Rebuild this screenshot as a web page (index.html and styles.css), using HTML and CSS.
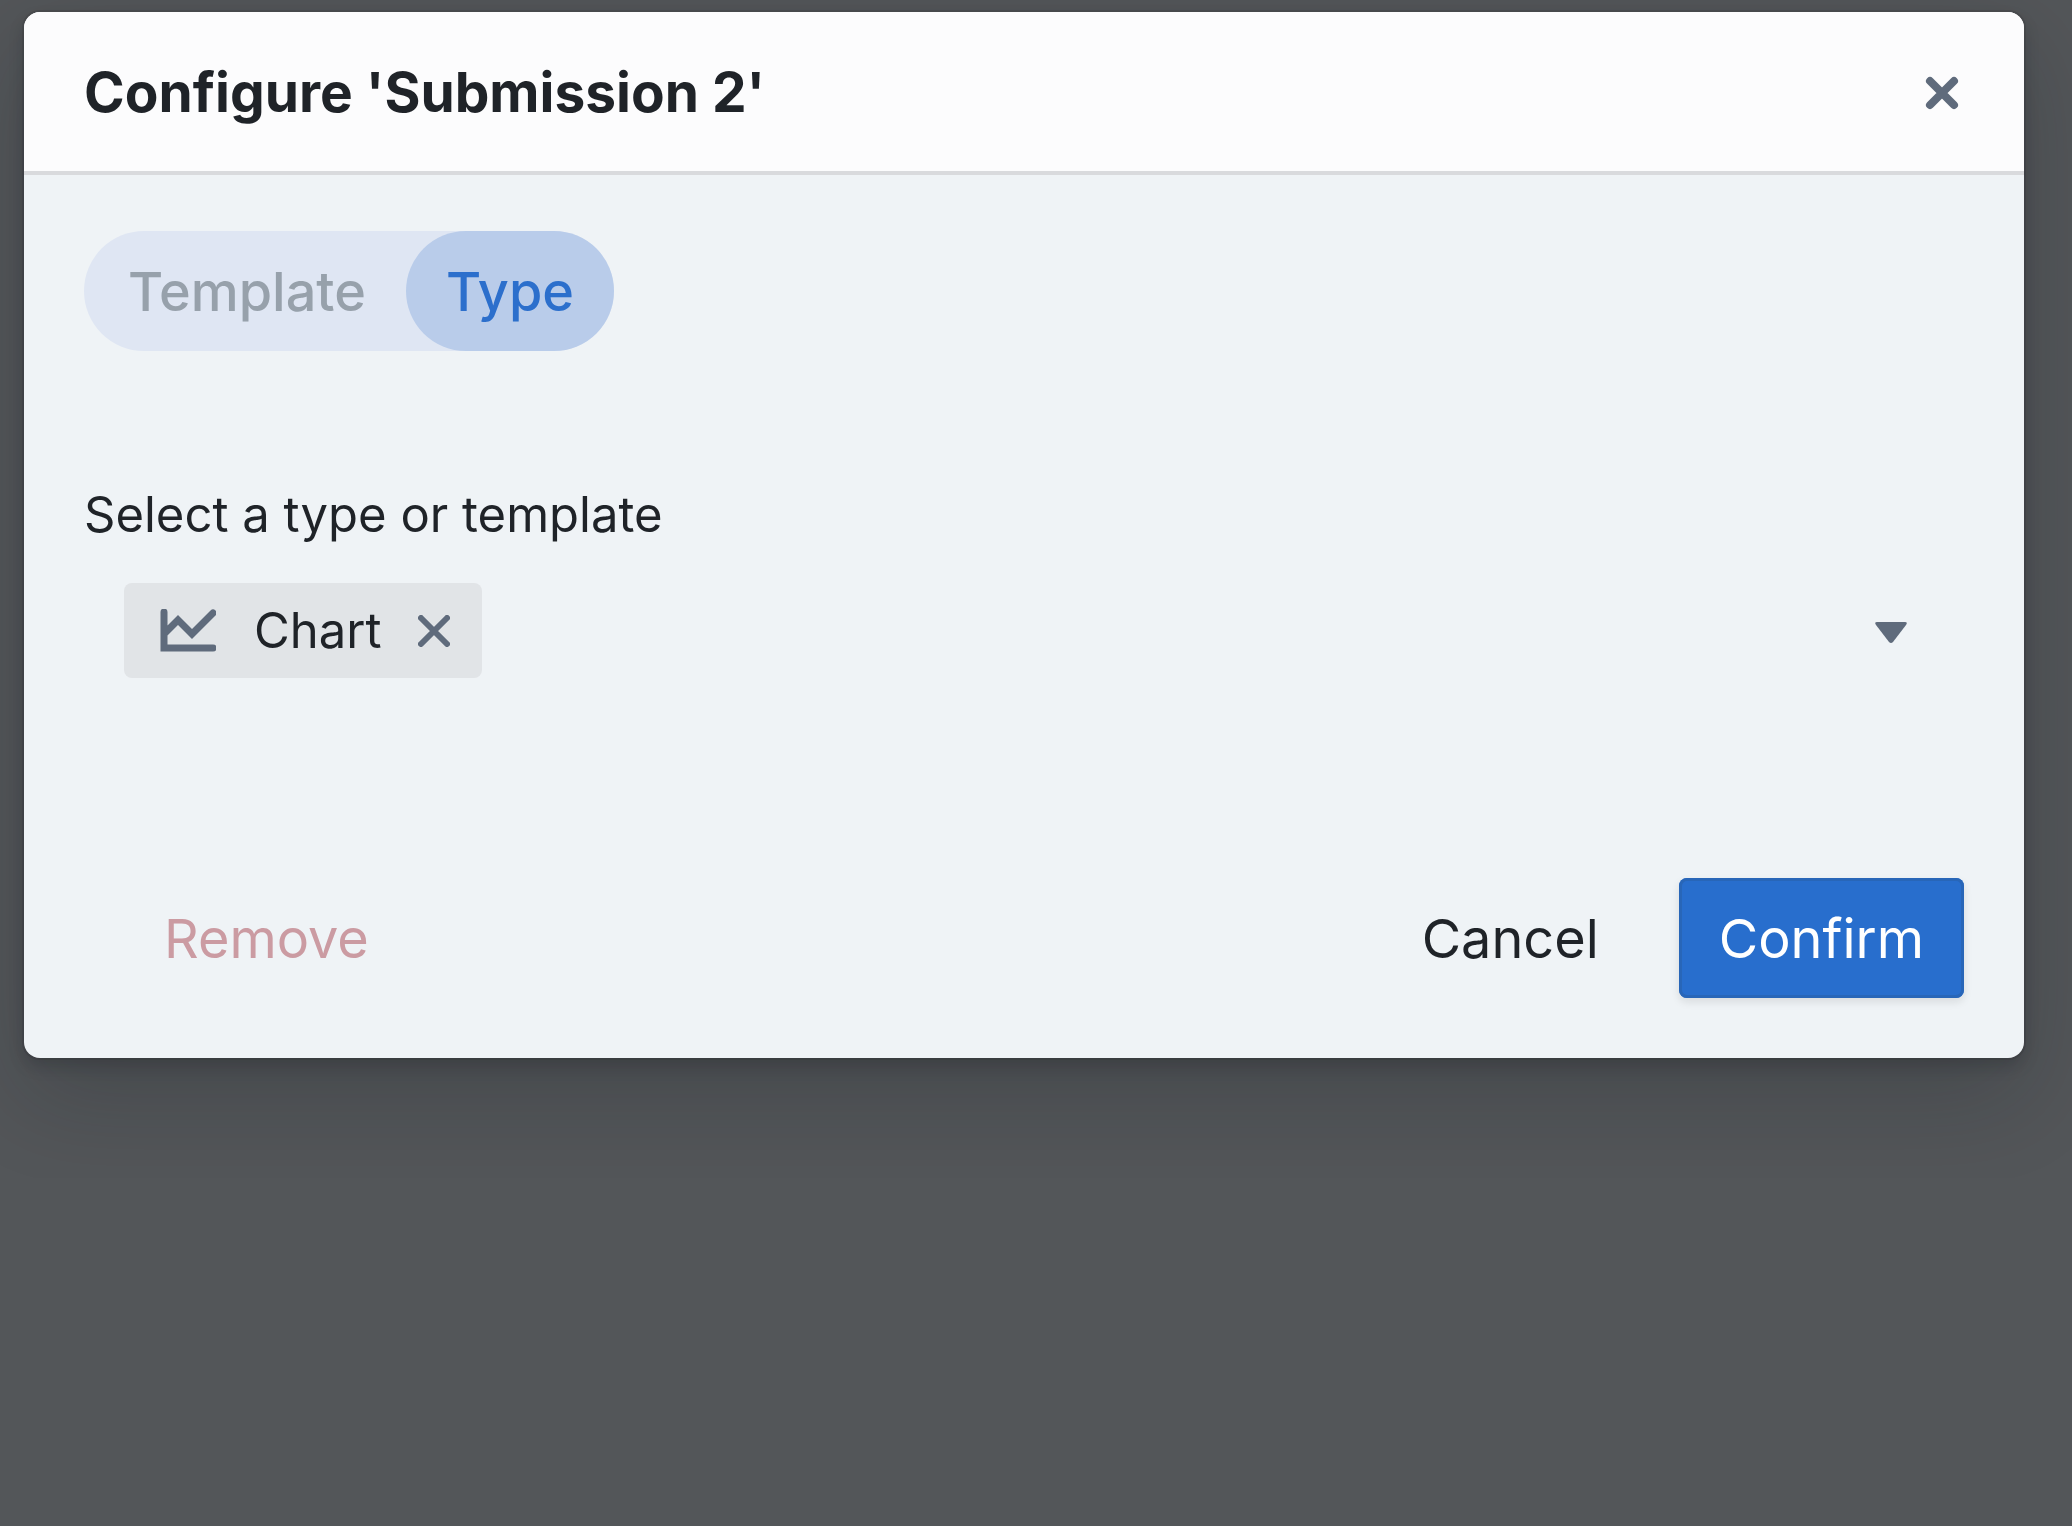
FILE: index.html
```html
<!DOCTYPE html>
<html lang="en">
  <head>
    <meta charset="utf-8">
    <meta name="viewport" content="width=device-width, initial-scale=1">
    <title>Configure 'Submission 2'</title>
    <link rel="stylesheet" href="styles.css">
  </head>
<body>
  <div class="dialog" role="dialog" aria-labelledby="dialog-title">
    <div class="dialog-header">
      <h1 id="dialog-title">Configure 'Submission 2'</h1>
      <button type="button" class="close" aria-label="Close">
        <svg width="34" height="34" viewBox="0 0 34 34"><path d="M5 5L29 29M29 5L5 29"/></svg>
      </button>
    </div>
    <form class="dialog-body">
      <div class="tabs">
        <button type="button">Template</button>
        <button type="button" class="active">Type</button>
      </div>

      <label for="type">Select a type or template</label>
      <div class="picker">
        <span class="tag">
          <svg class="chart" width="56" height="44" viewBox="0 0 56 44"><path d="M4 3V39H53M5 24L18 11L32 25L53 4"/></svg>
          Chart
          <button type="button" class="tag-remove" aria-label="Remove Chart">
            <svg width="32" height="32" viewBox="0 0 32 32"><path d="M3 3L29 29M29 3L3 29"/></svg>
          </button>
        </span>
        <input type="text" id="type" autocomplete="off">
        <button type="button" class="caret" aria-label="Show options">
          <svg width="34" height="24" viewBox="0 0 34 24"><path d="M3 1H31Q34 1 32 4L19 21Q17 23 15 21L2 4Q0 1 3 1Z"/></svg>
        </button>
      </div>

      <div class="actions">
        <button type="button" class="remove">Remove</button>
        <button type="button" class="cancel">Cancel</button>
        <button type="submit" class="confirm">Confirm</button>
      </div>
    </form>
  </div>
</body>
</html>
```

FILE: styles.css
```css
* {
  box-sizing: border-box;
}
body {
  margin: 0;
  padding: 12px 48px 120px 24px;
  background: #535659;
  color: #1f2328;
  font-family: Inter, "Liberation Sans", sans-serif;
  font-size: 54px;
  line-height: 72px;
}
button, input {
  margin: 0;
  padding: 0;
  border: 0;
  background: transparent;
  color: inherit;
  font: inherit;
}
button {
  cursor: pointer;
}
svg {
  display: block;
  fill: none;
  stroke: #5f6b7c;
}
.dialog {
  border-radius: 16px;
  background: #eff3f6;
  box-shadow: 0 0 0 2px rgba(17,20,24,0.1), 0 8px 16px rgba(17,20,24,0.2), 0 36px 96px rgba(17,20,24,0.2);
}
.dialog-header {
  display: flex;
  align-items: center;
  justify-content: space-between;
  height: 163px;
  padding: 0 60px;
  border-bottom: 4px solid #d9dadd;
  border-radius: 16px 16px 0 0;
  background: #fcfcfd;
}
h1 {
  margin: 0;
  font-size: 55px;
  font-weight: 700;
}
.close {
  padding: 2px 5px 0;
}
.close svg {
  stroke-width: 8px;
  stroke-linecap: round;
}
.dialog-body {
  padding: 56px 60px 60px;
}
.tabs {
  display: flex;
  width: fit-content;
  margin-bottom: 128px;
  border-radius: 60px;
  background: #dfe6f3;
}
.tabs button {
  height: 120px;
  padding: 2px 40px 0 44px;
  border-radius: 60px;
  color: #97a1ab;
  font-weight: 500;
}
.tabs .active {
  padding: 2px 40px 0;
  background: #b9ccea;
  color: #2c6fcc;
}
label {
  display: block;
  font-size: 49px;
}
.picker {
  display: flex;
  align-items: center;
  padding: 32px 56px 0 40px;
  font-size: 49px;
}
.tag {
  display: flex;
  align-items: center;
  height: 95px;
  padding: 0 32px 0 36px;
  border-radius: 8px;
  background: #e1e4e7;
}
.chart {
  margin-right: 38px;
  stroke-width: 7px;
  stroke-linecap: round;
}
.tag-remove {
  margin-left: 36px;
}
.tag-remove svg {
  stroke-width: 6px;
  stroke-linecap: round;
}
.picker input {
  flex: 1;
  min-width: 0;
  height: 95px;
  outline: none;
}
.caret {
  padding-top: 4px;
}
.caret svg {
  fill: #5f6b7c;
  stroke: none;
}
.actions {
  display: flex;
  gap: 40px;
  margin-top: 200px;
}
.actions button {
  height: 120px;
  padding: 2px 40px 0;
  border-radius: 8px;
}
.actions .remove {
  margin: 0 auto 0 40px;
  color: #cb9ba2;
}
.actions .confirm {
  background: #286ecd;
  box-shadow: inset 0 0 0 3px #2866b8, 0 4px 8px rgba(17,20,24,0.1);
  color: #fff;
}
```
